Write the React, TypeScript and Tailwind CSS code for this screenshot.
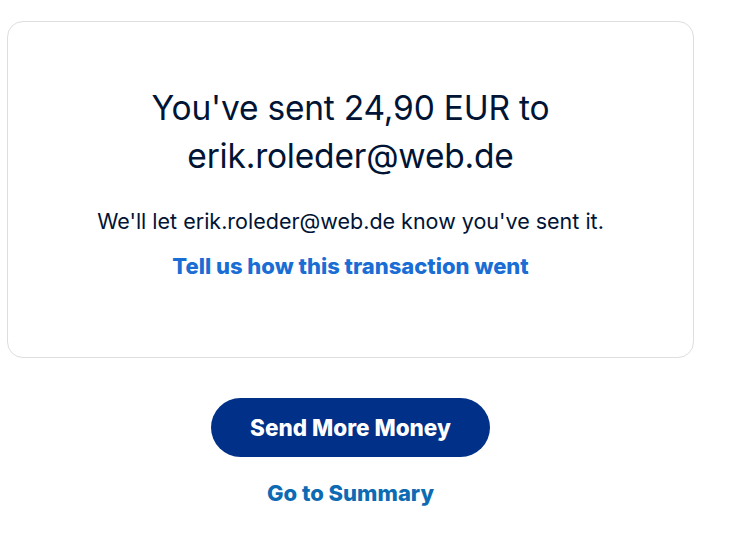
export default function App() {
  return (
    <div className="min-h-[551px] w-[741px] bg-white" style={{ fontFamily: "Inter, 'Noto Sans', sans-serif" }}>
      <div className="ml-[7px] w-[687px] pt-[21px]">
        <div className="flex h-[337px] flex-col items-center rounded-[16px] border border-[#dedede] bg-white pt-[62px]">
          <h1 className="text-center text-[33.5px] leading-[48px] font-normal tracking-[-0.2px] text-[#001435]">
            You've sent 24,90 EUR to
            <br />
            erik.roleder@web.de
          </h1>
          <p className="mt-[27px] text-center text-[21.5px] leading-[28px] text-[#001435]">
            We'll let erik.roleder@web.de know you've sent it.
          </p>
          <a className="mt-[17px] text-[22px] leading-[28px] font-extrabold text-[#1a6dd4]">
            Tell us how this transaction went
          </a>
        </div>
        <div className="mt-[40px] flex flex-col items-center">
          <button className="h-[59px] w-[279px] rounded-full bg-[#003087] text-[22.5px] font-extrabold text-white">
            Send More Money
          </button>
          <a className="mt-[22px] text-[22px] leading-[28px] font-extrabold text-[#0d6bb3]">Go to Summary</a>
        </div>
      </div>
    </div>
  );
}
